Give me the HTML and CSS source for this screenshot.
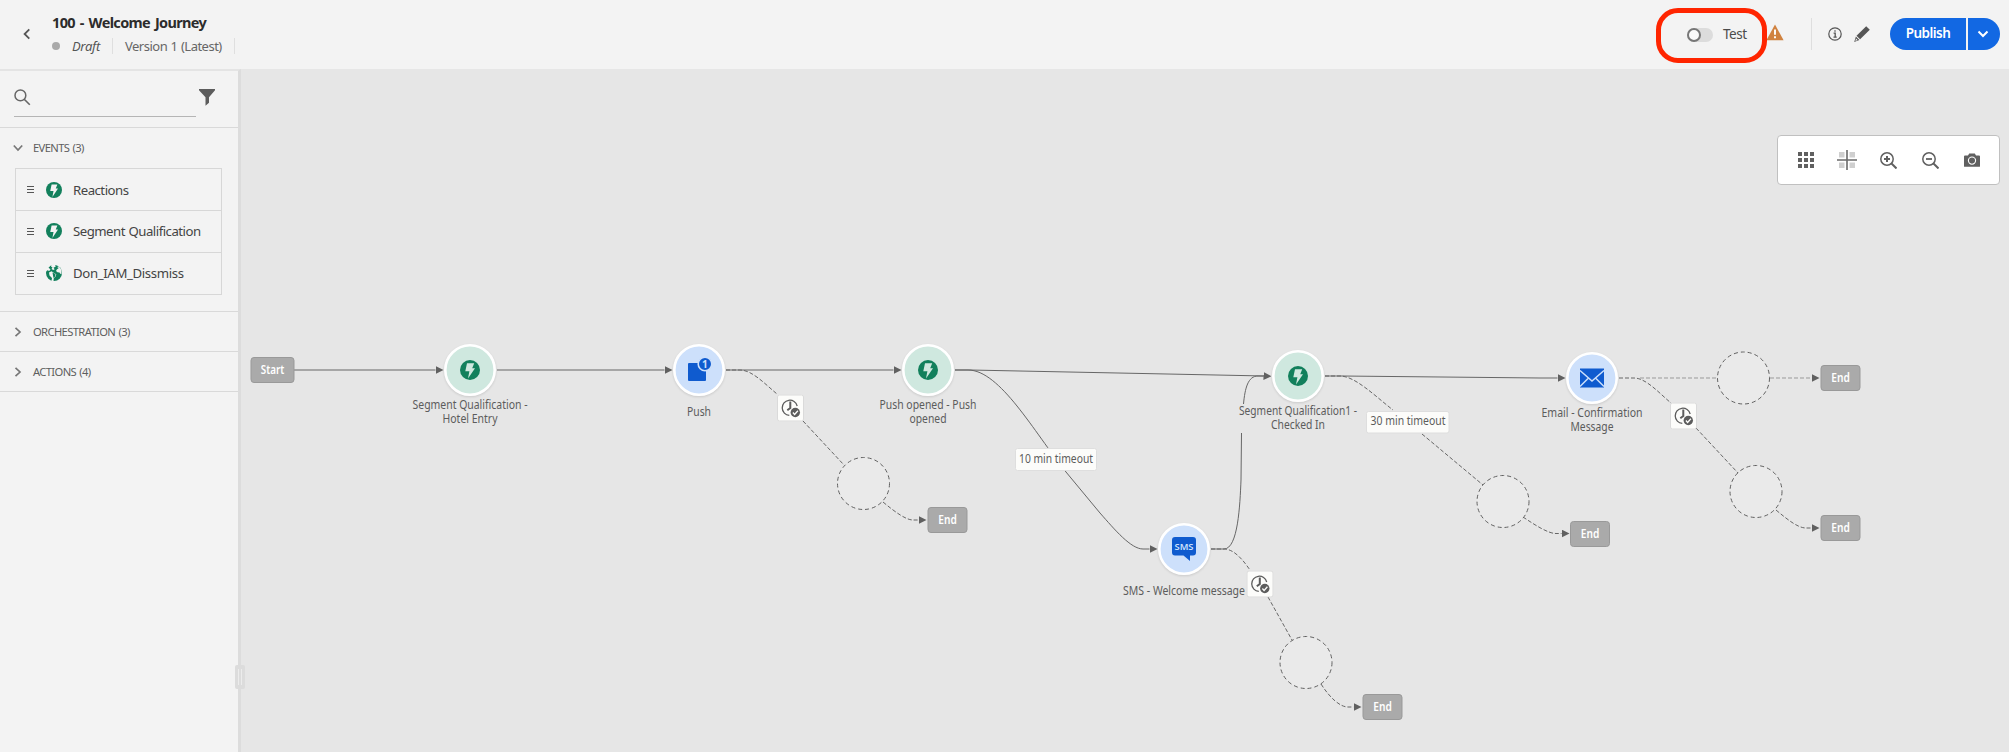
FILE: index.html
```html
<!DOCTYPE html>
<html lang="en">
<head>
<meta charset="utf-8">
<title>100 - Welcome Journey</title>
<link rel="stylesheet" href="styles.css">
</head>
<body>
<svg class="defs" width="0" height="0" aria-hidden="true">
  <symbol id="bolt" viewBox="0 0 20 20"><circle cx="10" cy="10" r="10" fill="#12805c" class="disc"/><path d="M7 3.200h7.200l-2 5H15L8 18.600l1.400-7.400H5.300z" fill="currentColor"/></symbol>
  <symbol id="clock" viewBox="0 0 27 27"><rect x=".5" y=".5" width="26" height="26" rx="2" fill="#fcfcfa" stroke="#dadada"/><path d="M12.300 20.900A7.600 7.600 0 1 1 20.200 11.500" fill="none" stroke="#5c5c5c" stroke-width="1.300"/><path d="M13.300 7v6.500L10.300 15.800" fill="none" stroke="#5c5c5c" stroke-width="2"/><circle cx="18.300" cy="18" r="4.700" fill="#5c5c5c"/><path d="M15.900 18l1.700 1.900 3.300-3.700" fill="none" stroke="#fcfcfa" stroke-width="1.300"/></symbol>
  <symbol id="chevron" viewBox="0 0 12 12"><path d="M3.500 1.800L8 6l-4.500 4.200" fill="none" stroke="#777" stroke-width="1.700"/></symbol>
</svg>

<header class="topbar">
  <svg class="back" width="10" height="12" viewBox="0 0 10 12"><path d="M7.300 1.300L2.600 6l4.700 4.700" fill="none" stroke="#555" stroke-width="1.800"/></svg>
  <div class="heading">
    <h1>100 - Welcome Journey</h1>
    <div class="meta"><i class="dot"></i><em>Draft</em><i class="rule"></i><span>Version 1 (Latest)</span><i class="rule"></i></div>
  </div>
  <div class="tools">
    <label class="test"><span class="toggle"></span><span>Test</span></label>
    <svg class="warn" width="18" height="17" viewBox="0 0 18 17"><path d="M9 .5L17.600 16.300H.4z" fill="#d0823f"/><path d="M9 5.500v5.200M9 12.200v2" stroke="#fff" stroke-width="1.900"/></svg>
    <i class="vrule"></i>
    <svg class="info" width="14" height="14" viewBox="0 0 14 14"><circle cx="7" cy="7" r="6.200" fill="none" stroke="#555" stroke-width="1.200"/><path d="M7 3.200v1.500M5.600 6.200h1.600v3.900M5.500 10.100h3.200" fill="none" stroke="#555" stroke-width="1.300"/></svg>
    <svg class="pencil" width="16" height="16" viewBox="0 0 16 16"><path d="M12.200.3l3.600 3.500L6.100 13.200 2.500 9.800zM1.900 10.600l3.500 3.300L.2 15.900z" fill="#555"/><path d="M2 12.600l1.600 1.500-2.200.9z" fill="#f3f3f3"/></svg>
    <div class="publish"><button class="main">Publish</button><button class="more"><svg width="12" height="8" viewBox="0 0 12 8"><path d="M1.500 1.500L6 6l4.500-4.500" fill="none" stroke="#fff" stroke-width="2"/></svg></button></div>
  </div>
  <div class="highlight"></div>
</header>

<div class="workspace">
  <aside class="sidebar">
    <div class="search">
      <div class="field"><svg width="17" height="17" viewBox="0 0 17 17"><circle cx="6.400" cy="6.400" r="5.400" fill="none" stroke="#666" stroke-width="1.500"/><path d="M10.200 10.200l5.600 5.600" stroke="#666" stroke-width="1.600"/></svg></div>
      <svg class="funnel" width="16" height="17" viewBox="0 0 16 17"><path d="M0 0h16v1.300L10 8.200v5.600L6.500 16.800V8.200L0 1.300z" fill="#5c5c5c"/></svg>
    </div>
    <section class="events">
      <h2><svg class="down" width="12" height="12"><use href="#chevron"/></svg>EVENTS (3)</h2>
      <ul>
        <li><i class="grip"></i><svg width="16" height="16"><use href="#bolt"/></svg><span>Reactions</span></li>
        <li><i class="grip"></i><svg width="16" height="16"><use href="#bolt"/></svg><span class="seg">Segment Qualification</span></li>
        <li><i class="grip"></i><svg width="16" height="16" viewBox="0 0 16 16"><circle cx="8" cy="8" r="8" fill="#12805c"/><path d="M0 2.500L2.500 0 5 .3 3 2.800 5 4.300 3.800 6 1.800 5.300.5 6.500 0 6zM6 0h3.500l.8 1.500L8 2.700l1.200 1.500-1.500.8L6 4 7 2.500 5.500 1.500zM3.500 7.500L6 6.300 8.500 8l2.300 1.200-.8 2.500-1.700 1.300L8 16H6l.5-3L4 10.500zM11.500 2l1.800 1-2 1.500L10.500 6l1.500 1.300 2 .2.700 1.300 1.300.2V5L13.500 1.500z" fill="#f3f3f3" transform="translate(-.5 0)"/><path d="M6.500 7.500l3 1.500-.3 2.500L7.500 13 7 10.500z" fill="#12805c"/></svg><span>Don_IAM_Dissmiss</span></li>
      </ul>
    </section>
    <section><h2><svg width="12" height="12"><use href="#chevron"/></svg>ORCHESTRATION (3)</h2></section>
    <section><h2><svg width="12" height="12"><use href="#chevron"/></svg>ACTIONS (4)</h2></section>
    <div class="handle"></div>
  </aside>

  <main class="canvas">
    <svg class="diagram" width="1768" height="683" viewBox="241 69 1768 683">
      <defs><marker id="arrow" viewBox="0 0 8 8" refX="0" refY="4" markerWidth="8" markerHeight="8" markerUnits="userSpaceOnUse" orient="auto"><path d="M0 0l8 4-8 4z" fill="#606060"/></marker></defs>
      <g class="edge">
        <path d="M294 370H435.500"/><path d="M497 370H664.500"/><path d="M726 370H893.500"/>
        <path d="M955 370H970L1250 375.700 1263.500 376"/>
        <path d="M955 370H968C1000 370 1034 432 1066 472L1100 513C1115 530 1131 549 1143 549H1149.500"/>
        <path class="plain" d="M1211 549H1224C1238 549 1240 505 1241 480L1241.500 433"/>
        <path class="plain" d="M1243.500 404C1245 388 1248 376 1258 376H1264"/>
        <path d="M1325 376H1342L1540 378H1557.500"/>
      </g>
      <g class="edge dashed">
        <path class="plain" d="M726 370H740C752 370 765 384 777 394M803 421L844 465"/>
        <path d="M883 502C895 512 906 520 913 520H918.500"/>
        <path class="plain" d="M1325 376H1340C1355 376 1375 396 1393 410M1422 434L1483 485"/>
        <path d="M1523 517C1535 525 1548 533.500 1556 533.500H1561.500"/>
        <path class="plain" d="M1211 549H1225C1236 550 1245 563 1250 570M1268 597L1292 640"/>
        <path d="M1321 684C1330 698 1340 707 1348 707H1353.500"/>
        <path class="plain" d="M1619 378H1634C1646 378 1659 393 1671 403M1696 428L1738 473"/>
        <path d="M1776 510C1788 520 1798 528 1806 528H1811.500"/>
        <path class="plain faint" d="M1640 378H1717"/><path class="faint" d="M1770 378H1811.500"/>
      </g>
      <g class="empty">
        <circle cx="863.500" cy="483.500" r="26"/><circle cx="1503" cy="501.500" r="26"/><circle cx="1743.500" cy="378" r="26"/><circle cx="1756" cy="491.500" r="26"/><circle cx="1306" cy="662.500" r="26"/>
      </g>
      <g class="node event">
        <circle cx="470" cy="370" r="24.700"/><circle cx="928" cy="370" r="24.700"/><circle cx="1298" cy="376" r="24.700"/>
        <use href="#bolt" x="460" y="360" width="20" height="20"/><use href="#bolt" x="918" y="360" width="20" height="20"/><use href="#bolt" x="1288" y="366" width="20" height="20"/>
      </g>
      <g class="node action">
        <circle cx="699" cy="370" r="24.700"/><circle cx="1592" cy="378" r="24.700"/><circle cx="1184" cy="549" r="24.700"/>
      </g>
      <g fill="#0f5bcf">
        <rect x="688" y="363" width="18" height="18" rx="1"/><circle cx="705" cy="364" r="6.800" stroke="#cde0fb" stroke-width="1.600"/>
        <text class="badge" x="704.800" y="367.500">1</text>
        <rect x="1580" y="368.500" width="24" height="19"/><path d="M1580 370.500l12 10.500 12-10.500M1580 386.500l8-8M1604 386.500l-8-8" fill="none" stroke="#cde0fb" stroke-width="1.500"/>
        <path d="M1175 537h18a3 3 0 0 1 3 3v12.500a3 3 0 0 1-3 3h-3v5.500l-6.500-5.500H1175a3 3 0 0 1-3-3V540a3 3 0 0 1 3-3z"/>
        <text class="sms" x="1184" y="549.800" textLength="19" lengthAdjust="spacingAndGlyphs">SMS</text>
      </g>
      <g class="terminal">
        <rect x="251" y="357.500" width="43" height="25" rx="3"/><text x="272.500" y="374" textLength="23.500" lengthAdjust="spacingAndGlyphs">Start</text>
        <rect x="928" y="507.500" width="39" height="25" rx="3"/><text x="947.500" y="524" textLength="18.500" lengthAdjust="spacingAndGlyphs">End</text>
        <rect x="1570.500" y="521.500" width="39" height="25" rx="3"/><text x="1590" y="538" textLength="18.500" lengthAdjust="spacingAndGlyphs">End</text>
        <rect x="1821" y="365.500" width="39" height="25" rx="3"/><text x="1840.500" y="382" textLength="18.500" lengthAdjust="spacingAndGlyphs">End</text>
        <rect x="1821" y="515.500" width="39" height="25" rx="3"/><text x="1840.500" y="532" textLength="18.500" lengthAdjust="spacingAndGlyphs">End</text>
        <rect x="1363" y="694.500" width="39" height="25" rx="3"/><text x="1382.500" y="711" textLength="18.500" lengthAdjust="spacingAndGlyphs">End</text>
      </g>
      <use href="#clock" x="777" y="394.500" width="27" height="27"/><use href="#clock" x="1246.500" y="570.500" width="27" height="27"/><use href="#clock" x="1670" y="402.500" width="27" height="27"/>
      <g class="chip"><rect x="1015.500" y="448.500" width="81" height="22" rx="2"/><rect x="1366.500" y="411.500" width="82.500" height="21.500" rx="2"/></g>
      <g class="label">
        <text x="1056" y="463" textLength="74" lengthAdjust="spacingAndGlyphs">10 min timeout</text><text x="1408" y="425" textLength="75" lengthAdjust="spacingAndGlyphs">30 min timeout</text>
        <text x="470" y="409" textLength="115" lengthAdjust="spacingAndGlyphs">Segment Qualification -</text><text x="470" y="423" textLength="55" lengthAdjust="spacingAndGlyphs">Hotel Entry</text>
        <text x="699" y="416" textLength="24" lengthAdjust="spacingAndGlyphs">Push</text>
        <text x="928" y="409" textLength="97" lengthAdjust="spacingAndGlyphs">Push opened - Push</text><text x="928" y="423" textLength="37" lengthAdjust="spacingAndGlyphs">opened</text>
        <text x="1298" y="415" textLength="118" lengthAdjust="spacingAndGlyphs">Segment Qualification1 -</text><text x="1298" y="429" textLength="54" lengthAdjust="spacingAndGlyphs">Checked In</text>
        <text x="1592" y="417" textLength="101" lengthAdjust="spacingAndGlyphs">Email - Confirmation</text><text x="1592" y="431" textLength="43" lengthAdjust="spacingAndGlyphs">Message</text>
        <text x="1184" y="595" textLength="122" lengthAdjust="spacingAndGlyphs">SMS - Welcome message</text>
      </g>
    </svg>
    <div class="palette">
      <svg width="16" height="16" viewBox="0 0 16 16" fill="#606060"><path d="M0 0h4v4H0zM6 0h4v4H6zM12 0h4v4h-4zM0 6h4v4H0zM6 6h4v4H6zM12 6h4v4h-4zM0 12h4v4H0zM6 12h4v4H6zM12 12h4v4h-4z"/></svg>
      <svg width="20" height="20" viewBox="0 0 20 20"><path d="M2 2h5.500v5.500H2zM12.500 2H18v5.500h-5.500zM2 12.500h5.500V18H2zM12.500 12.500H18V18h-5.500z" fill="#cfcfcf"/><path d="M10 0v20M0 10h20" stroke="#6a6a6a" stroke-width="1.600"/></svg>
      <svg width="17" height="17" viewBox="0 0 17 17" fill="none" stroke="#606060"><circle cx="7" cy="7" r="6.200" stroke-width="1.500"/><path d="M4 7h6M7 4v6" stroke-width="2"/><path d="M11.500 11.500l5 5" stroke-width="2"/></svg>
      <svg width="17" height="17" viewBox="0 0 17 17" fill="none" stroke="#606060"><circle cx="7" cy="7" r="6.200" stroke-width="1.500"/><path d="M4 7h6" stroke-width="1.800"/><path d="M11.500 11.500l5 5" stroke-width="2"/></svg>
      <svg width="16" height="14" viewBox="0 0 16 14"><path d="M1 2.500h3L5.200.5h5.600L12 2.500h3a1 1 0 0 1 1 1V13a.8.8 0 0 1-1 .8H1A.8.8 0 0 1 0 13V3.500a1 1 0 0 1 1-1z" fill="#606060"/><circle cx="8" cy="7.600" r="3.600" fill="none" stroke="#fff" stroke-width="1.100"/></svg>
    </div>
  </main>
</div>
</body>
</html>
```
FILE: styles.css
```css
*, *::before { box-sizing: border-box; }
body { margin: 0; width: 2009px; height: 752px; overflow: hidden; background: #e6e6e6; font-family: "Noto Sans", sans-serif; color: #4b4b4b; display: flex; flex-direction: column; }
svg { display: block; flex: none; }
.defs { position: absolute; }
i { flex: none; }

.topbar { position: relative; height: 69px; flex: none; display: flex; background: #f3f3f3; }
.back { margin: 28px 0 0 22px; }
.heading { margin: 12px 0 0 20px; }
h1 { margin: 0; font-size: 14.500px; line-height: 20px; font-weight: 700; color: #2c2c2c; letter-spacing: -0.650px; word-spacing: 1.700px; white-space: nowrap; }
.meta { display: flex; align-items: center; height: 28px; font-size: 13px; letter-spacing: -0.500px; word-spacing: 0.500px; color: #666; white-space: nowrap; }
.dot { width: 8px; height: 8px; border-radius: 50%; background: #a9a9a9; margin-right: 12px; }
.meta em { width: 40px; color: #555; letter-spacing: -0.300px; }
.meta span { width: 109px; }
.rule { width: 1px; height: 16px; background: #dfdfdf; }
.meta .rule + span { margin-left: 12px; }

.tools { margin-left: auto; display: flex; height: 68px; padding-right: 9px; align-items: center; }
.test { display: flex; align-items: center; font-size: 13.500px; letter-spacing: -0.500px; width: 79px; margin-top: -1px; }
.toggle { width: 26px; height: 14px; border-radius: 7px; background: #dcdcdc; margin-right: 10px; flex: none; position: relative; top: 1px; }
.toggle::before { content: ""; display: block; width: 14px; height: 14px; border: 2px solid #777; border-radius: 50%; background: #fafafa; }
.warn { margin-top: -3px; }
.vrule { width: 1px; height: 32px; background: #dedede; margin: 0 16px 0 27px; }
.pencil { margin: 0 20px 0 12px; }
.publish { display: flex; gap: 2px; }
.publish button { border: 0; height: 32px; padding: 0 0 2px; background: #1268e3; color: #fff; font: 600 13.500px "Noto Sans", sans-serif; letter-spacing: -0.550px; }
.publish .main { width: 76px; border-radius: 16px 0 0 16px; }
.publish .more { width: 32px; border-radius: 0 16px 16px 0; display: flex; align-items: center; padding: 0 0 0 9px; }
.highlight { position: absolute; left: 1656px; top: 8px; width: 111px; height: 55px; border: 5px solid #ff2500; border-radius: 22px; }

.workspace { display: flex; flex: 1; min-height: 0; }
.sidebar { position: relative; width: 241px; flex: none; background: #f3f3f3; border-right: 3px solid #dcdcdc; border-top: 2px solid #e4e4e4; }
.search { height: 57px; border-bottom: 1px solid #d9d9d9; padding: 17px 23px 0 14px; display: flex; justify-content: space-between; }
.field { width: 182px; height: 29px; border-bottom: 1px solid #b5b5b5; padding-top: 1px; }
.funnel { margin-top: 1px; }
section { height: 40px; border-bottom: 1px solid #d9d9d9; }
.events { height: 184px; }
h2 { margin: 0; height: 39px; padding-left: 12px; display: flex; align-items: center; font-size: 11.200px; font-weight: 400; letter-spacing: -0.620px; word-spacing: 1px; color: #5e5e5e; white-space: nowrap; }
h2 svg { margin-right: 9px; }
.events h2 { height: 40px; padding-bottom: 1px; }
.down { transform: rotate(90deg); }
ul { list-style: none; margin: 0 16px 0 15px; padding: 0; border: 1px solid #d7d7d7; }
li { height: 42px; display: flex; align-items: center; padding: 0 0 1px 11px; font-size: 13.200px; letter-spacing: -0.500px; word-spacing: 0.600px; white-space: nowrap; color: #444; }
li:first-child { height: 41px; padding-bottom: 0; }
li svg { color: #f3f3f3; margin-right: 11px; }
li + li { border-top: 1px solid #d7d7d7; }
li:last-child span { letter-spacing: -0.350px; }
.grip { width: 7px; height: 7px; border-top: 1px solid #555; border-bottom: 1px solid #555; background: linear-gradient(#555, #555) 0 2px / 7px 1px no-repeat; margin-right: 12px; }
.handle { position: absolute; left: 235px; top: 594px; width: 10px; height: 24px; padding: 4px 3px; border-radius: 2px; background: #dcdcdc; }
.handle::before { content: ""; display: block; width: 4px; height: 16px; border: solid #ececec; border-width: 0 1px; }

.canvas { position: relative; flex: 1; }
.edge path { fill: none; stroke: #666; stroke-width: 1; marker-end: url(#arrow); }
.edge .plain { marker-end: none; }
.dashed path { stroke-dasharray: 4 2; }
.dashed .faint { stroke: #999; }
.empty circle { fill: #eaeaea; stroke: #606060; stroke-width: 1; stroke-dasharray: 4 3; }
.node > circle { stroke: #fff; stroke-width: 2.600; filter: drop-shadow(0 1px 1px rgba(0,0,0,.12)); }
.event { color: #cfe8df; }
.event > circle { fill: #cfe8df; }
.action > circle { fill: #cde0fb; }
.diagram text { text-anchor: middle; }
.label text { font-size: 11.800px; fill: #5c5c5c; }
.terminal rect { fill: #aaa; stroke: #999; }
.terminal text { fill: #fff; font-size: 11.800px; font-weight: 600; }
.diagram .badge { fill: #cde0fb; font-size: 10px; font-weight: 700; }
.sms { fill: #cde0fb; font-size: 9.500px; font-weight: 600; }
.chip rect { fill: #fcfcfa; stroke: #dedede; }
.palette { position: absolute; right: 9px; top: 66px; width: 223px; height: 50px; background: #fff; border: 1px solid #c0c0c0; border-radius: 4px; display: grid; grid-template-columns: repeat(5, 41.500px); justify-content: center; align-items: center; justify-items: center; }
```
